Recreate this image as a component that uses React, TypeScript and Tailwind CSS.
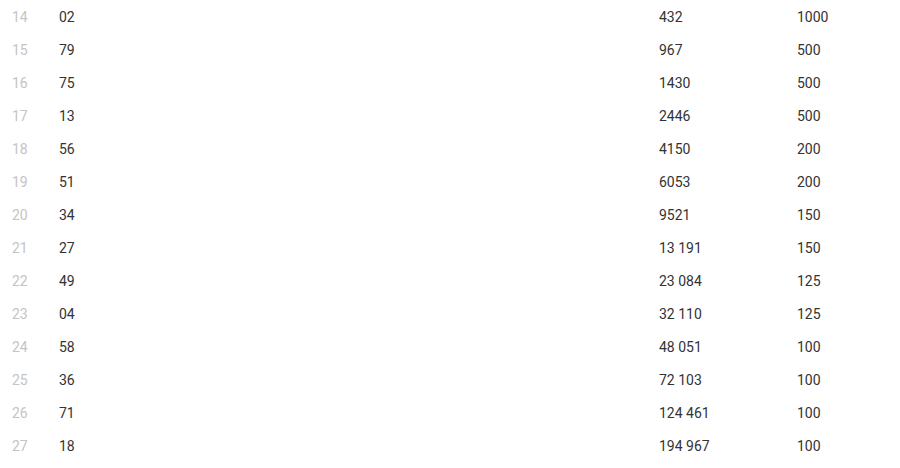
const rows = [
  { rank: 14, num: '02', count: '432', prize: '1000' },
  { rank: 15, num: '79', count: '967', prize: '500' },
  { rank: 16, num: '75', count: '1430', prize: '500' },
  { rank: 17, num: '13', count: '2446', prize: '500' },
  { rank: 18, num: '56', count: '4150', prize: '200' },
  { rank: 19, num: '51', count: '6053', prize: '200' },
  { rank: 20, num: '34', count: '9521', prize: '150' },
  { rank: 21, num: '27', count: '13 191', prize: '150' },
  { rank: 22, num: '49', count: '23 084', prize: '125' },
  { rank: 23, num: '04', count: '32 110', prize: '125' },
  { rank: 24, num: '58', count: '48 051', prize: '100' },
  { rank: 25, num: '36', count: '72 103', prize: '100' },
  { rank: 26, num: '71', count: '124 461', prize: '100' },
  { rank: 27, num: '18', count: '194 967', prize: '100' },
];

export default function App() {
  return (
    <div className="w-[900px] h-[468px] bg-white overflow-hidden font-['Roboto',sans-serif] text-[14px]">
      {rows.map((r) => (
        <div
          key={r.rank}
          className="grid grid-cols-[47px_600px_138px_1fr] items-center h-[33px] pl-[12px] leading-none"
        >
          <span className="text-[#c4c4c4]">{r.rank}</span>
          <span className="text-[#333333]">{r.num}</span>
          <span className="text-[#333333]">{r.count}</span>
          <span className="text-[#333333]">{r.prize}</span>
        </div>
      ))}
    </div>
  );
}
